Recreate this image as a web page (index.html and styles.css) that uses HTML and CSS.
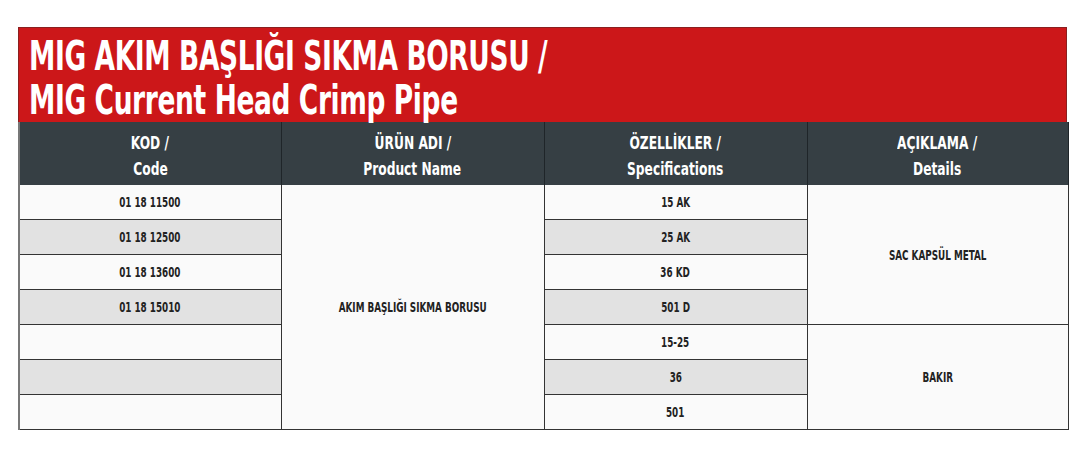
FILE: index.html
```html
<!DOCTYPE html>
<html lang="tr">
<head>
<meta charset="utf-8">
<title>MIG Akım Başlığı Sıkma Borusu</title>
<link rel="stylesheet" href="styles.css">
</head>
<body>
<div class="sheet">
  <div class="title">
    <div class="title-line"><span class="title-text">MIG AKIM BAŞLIĞI SIKMA BORUSU /</span></div>
    <div class="title-line"><span class="title-text">MIG Current Head Crimp Pipe</span></div>
  </div>
  <table class="grid">
    <colgroup>
      <col class="c1"><col class="c2"><col class="c3"><col class="c4">
    </colgroup>
    <thead>
      <tr>
        <th><span class="ht">KOD /</span><br><span class="ht">Code</span></th>
        <th><span class="ht">ÜRÜN ADI /</span><br><span class="ht">Product Name</span></th>
        <th><span class="ht">ÖZELLİKLER /</span><br><span class="ht">Specifications</span></th>
        <th><span class="ht">AÇIKLAMA /</span><br><span class="ht">Details</span></th>
      </tr>
    </thead>
    <tbody>
      <tr>
        <td class="w"><span class="t">01 18 11500</span></td>
        <td class="w" rowspan="7"><span class="t">AKIM BAŞLIĞI SIKMA BORUSU</span></td>
        <td class="w"><span class="t">15 AK</span></td>
        <td class="w" rowspan="4"><span class="t">SAC KAPSÜL METAL</span></td>
      </tr>
      <tr>
        <td class="g"><span class="t">01 18 12500</span></td>
        <td class="g"><span class="t">25 AK</span></td>
      </tr>
      <tr>
        <td class="w"><span class="t">01 18 13600</span></td>
        <td class="w"><span class="t">36 KD</span></td>
      </tr>
      <tr>
        <td class="g"><span class="t">01 18 15010</span></td>
        <td class="g"><span class="t">501 D</span></td>
      </tr>
      <tr>
        <td class="w"></td>
        <td class="w"><span class="t">15-25</span></td>
        <td class="w" rowspan="3"><span class="t">BAKIR</span></td>
      </tr>
      <tr>
        <td class="g"></td>
        <td class="g"><span class="t">36</span></td>
      </tr>
      <tr>
        <td class="w"></td>
        <td class="w"><span class="t">501</span></td>
      </tr>
    </tbody>
  </table>
</div>
</body>
</html>
```

FILE: styles.css
```css
html, body {
  margin: 0;
  padding: 0;
  background: #ffffff;
}

body {
  font-family: "DejaVu Sans Condensed", "Liberation Sans Narrow", "Liberation Sans", sans-serif;
  font-stretch: condensed;
  font-weight: bold;
}

.sheet {
  width: 1049px;
  margin: 27px 0 0 18px;
}

.title {
  background: #cc1719;
  border: 1px solid #8a2020;
  border-bottom: none;
  height: 95px;
  padding: 6px 0 0 10px;
  box-sizing: border-box;
  color: #ffffff;
}

.title-line {
  font-size: 40px;
  line-height: 44px;
  white-space: nowrap;
}

.title-text {
  display: inline-block;
  transform: scaleX(0.735);
  transform-origin: left center;
  letter-spacing: -0.5px;
}

.grid {
  width: 1049px;
  border-collapse: collapse;
  table-layout: fixed;
}

.grid col.c1 { width: 262px; }
.grid col.c2 { width: 263px; }
.grid col.c3 { width: 263px; }
.grid col.c4 { width: 261px; }

.grid th {
  background: #363f44;
  color: #ffffff;
  font-size: 17px;
  line-height: 26px;
  font-weight: bold;
  height: 63px;
  padding: 5px 0 0 0;
  box-sizing: border-box;
  border-left: 1px solid #1f2529;
  border-right: 1px solid #1f2529;
  text-align: center;
  vertical-align: middle;
}

.ht {
  display: inline-block;
  transform: scaleX(0.8);
}

.grid td {
  height: 34px;
  padding: 0;
  font-size: 14px;
  color: #222222;
  text-align: center;
  vertical-align: middle;
  border: 1px solid #333333;
}

.t {
  display: inline-block;
  transform: scaleX(0.7);
}

.grid td.w { background: #fafafa; }
.grid td.g { background: #e2e2e2; }

.grid tbody tr:first-child td { border-top: none; }
.grid td:first-child, .grid th:first-child { border-left: 2px solid #777777; }
```
